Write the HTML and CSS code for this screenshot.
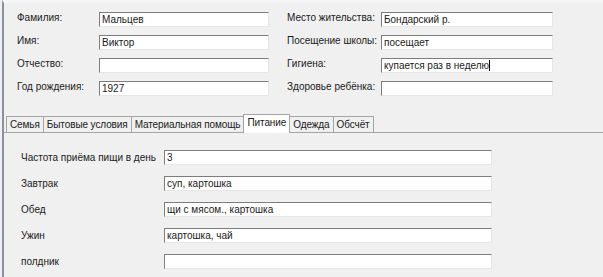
FILE: index.html
```html
<!DOCTYPE html>
<html lang="ru">
<head>
    <meta charset="UTF-8">
    <title>Карточка ребёнка</title>
    <link rel="stylesheet" href="styles.css">
</head>
<body>
    <div class="window">
        <div class="top">
            <span class="label">Фамилия:</span>
            <div class="field">Мальцев</div>
            <span class="label">Место жительства:</span>
            <div class="field field-r">Бондарский р.</div>

            <span class="label">Имя:</span>
            <div class="field">Виктор</div>
            <span class="label">Посещение школы:</span>
            <div class="field field-r">посещает</div>

            <span class="label">Отчество:</span>
            <div class="field"></div>
            <span class="label">Гигиена:</span>
            <div class="field field-r">купается раз в неделю<span class="caret"></span></div>

            <span class="label">Год рождения:</span>
            <div class="field">1927</div>
            <span class="label">Здоровье ребёнка:</span>
            <div class="field field-r"></div>
        </div>

        <div class="tabs">
            <div class="tab">Семья</div>
            <div class="tab">Бытовые условия</div>
            <div class="tab">Материальная помощь</div>
            <div class="tab active">Питание</div>
            <div class="tab">Одежда</div>
            <div class="tab">Обсчёт</div>
        </div>

        <div class="panel">
            <span class="label">Частота приёма пищи в день</span>
            <div class="field">3</div>
            <span class="label">Завтрак</span>
            <div class="field">суп, картошка</div>
            <span class="label">Обед</span>
            <div class="field">щи с мясом., картошка</div>
            <span class="label">Ужин</span>
            <div class="field">картошка, чай</div>
            <span class="label">полдник</span>
            <div class="field"></div>
        </div>
    </div>
</body>
</html>
```

FILE: styles.css
```css
body {
    margin: 0;
    background-color: #f0f0f0;
    font-family: "Liberation Sans", Arial, sans-serif;
    font-size: 10px;
    color: #1a1a1a;
}
.window {
    margin-left: 2px;
    border-left: 2px solid #8a90a2;
    border-top: 3px solid #f6f6f8;
    height: 274px;
}
.top {
    display: grid;
    grid-template-columns: 82px 188px 94px 172px;
    grid-auto-rows: 15px;
    row-gap: 8px;
    padding: 9px 0 18px 13px;
}
.label {
    line-height: 12px;
    white-space: nowrap;
}
.field {
    box-sizing: border-box;
    height: 15px;
    width: 170px;
    background-color: #fff;
    border-top: 1px solid #7d7d7d;
    border-left: 1px solid #7d7d7d;
    border-right: 1px solid #e6e6e6;
    border-bottom: 1px solid #e6e6e6;
    padding-left: 2px;
    line-height: 13px;
    white-space: nowrap;
    overflow: hidden;
}
.field-r {
    width: 172px;
}
.caret {
    display: inline-block;
    width: 1px;
    height: 11px;
    background-color: #000;
    vertical-align: -2px;
}
.tabs {
    display: flex;
    align-items: flex-end;
    height: 18px;
    padding-left: 2px;
    border-bottom: 1px solid #a5a5a5;
}
.tab {
    height: 15px;
    line-height: 15px;
    padding: 0 3px;
    border: 1px solid #a5a5a5;
    border-bottom: none;
    margin-right: -1px;
    white-space: nowrap;
    letter-spacing: -0.1px;
}
.tab.active {
    position: relative;
    height: 18px;
    margin-bottom: -1px;
    line-height: 16px;
    background-color: #fff;
    z-index: 1;
}
.panel {
    display: grid;
    grid-template-columns: 143px 328px;
    grid-auto-rows: 15px;
    row-gap: 11px;
    padding: 17px 0 0 17px;
}
.panel .label {
    line-height: 15px;
}
.panel .field {
    width: 328px;
}
```
